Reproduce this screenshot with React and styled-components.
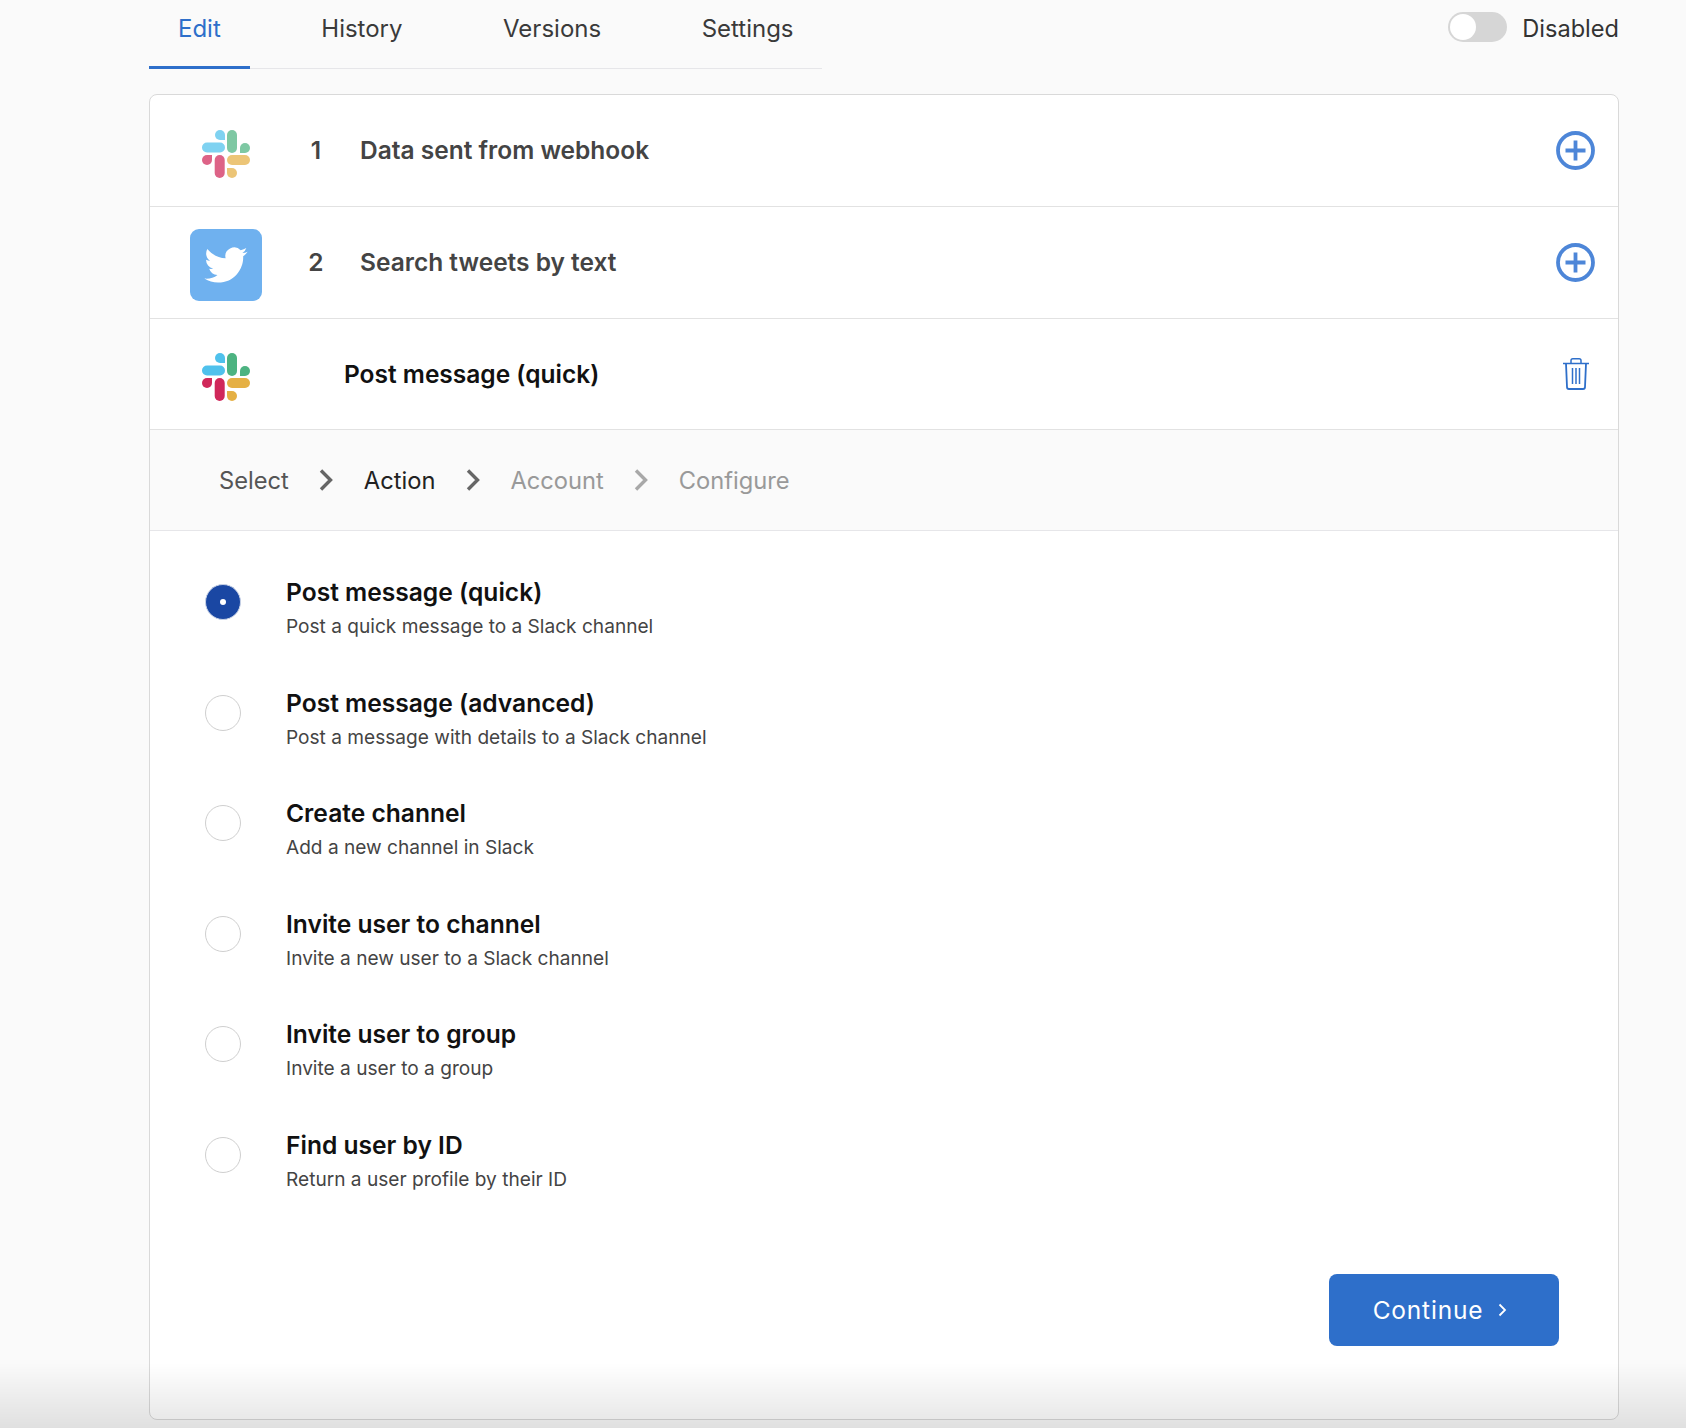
import React from 'react';
import styled, { createGlobalStyle } from 'styled-components';

const GlobalStyle = createGlobalStyle`
html, body {
  margin: 0;
  padding: 0;
  background: #fafafa;
  overflow: hidden;
}
* { box-sizing: border-box; }
`;

const actions = [
  { title: 'Post message (quick)', desc: 'Post a quick message to a Slack channel', selected: true },
  { title: 'Post message (advanced)', desc: 'Post a message with details to a Slack channel' },
  { title: 'Create channel', desc: 'Add a new channel in Slack' },
  { title: 'Invite user to channel', desc: 'Invite a new user to a Slack channel' },
  { title: 'Invite user to group', desc: 'Invite a user to a group' },
  { title: 'Find user by ID', desc: 'Return a user profile by their ID' },
];

function SlackLogo({ dim }) {
  return (
    <SlackSvg viewBox="0 0 48 48" $dim={dim}>
      <path fill="#4fc1ec" d="M18 0a5 5 0 0 0 0 10h5V5a5 5 0 0 0-5-5z" />
      <rect fill="#4fc1ec" x="0" y="12.5" width="23" height="10" rx="5" />
      <rect fill="#4db381" x="25" y="0" width="10" height="23" rx="5" />
      <path fill="#4db381" d="M43 13a5 5 0 0 0-5 5v5h5a5 5 0 0 0 0-10z" />
      <path fill="#d0285a" d="M5 25a5 5 0 0 0 0 10a5 5 0 0 0 5-5v-5z" />
      <rect fill="#d0285a" x="12.7" y="25" width="10" height="23" rx="5" />
      <rect fill="#e5b044" x="25" y="25" width="23" height="10" rx="5" />
      <path fill="#e5b044" d="M25 38v5a5 5 0 1 0 5-5z" />
    </SlackSvg>
  );
}

function PlusIcon() {
  return (
    <svg width="39" height="39" viewBox="0 0 39 39" fill="none">
      <circle cx="19.5" cy="19.5" r="17.5" stroke="#4d86d8" strokeWidth="3.8" />
      <path d="M19.5 9.5v20M9.5 19.5h20" stroke="#4d86d8" strokeWidth="3.8" />
    </svg>
  );
}

function TrashIcon() {
  return (
    <svg width="26" height="32" viewBox="0 0 26 32" fill="none" stroke="#2e6fca" strokeWidth="1.5">
      <path d="M0 5.5h26" />
      <path d="M8 5V2.6A1.8 1.8 0 0 1 9.8 .8h6.4A1.8 1.8 0 0 1 18 2.6V5" />
      <path d="M3 5.5l1 23.5a2 2 0 0 0 2 2h14a2 2 0 0 0 2-2l1-23.5" strokeWidth="1.8" />
      <path d="M9.5 10v16M13 10v16M16.5 10v16" />
    </svg>
  );
}

function Chevron({ color }) {
  return (
    <svg width="14" height="22" viewBox="0 0 14 22" fill="none">
      <path d="M2 1.5l9.5 9.5-9.5 9.5" stroke={color} strokeWidth="3.4" />
    </svg>
  );
}

export default function App() {
  return (
    <Page>
      <GlobalStyle />
      <TopBar>
        <Tabs>
          <Tab $active>Edit</Tab>
          <Tab>History</Tab>
          <Tab>Versions</Tab>
          <Tab>Settings</Tab>
        </Tabs>
        <ToggleGroup>
          <Toggle><Knob /></Toggle>
          <ToggleLabel>Disabled</ToggleLabel>
        </ToggleGroup>
      </TopBar>

      <Card>
        <StepRow>
          <LogoCell><SlackLogo dim /></LogoCell>
          <StepNumber>1</StepNumber>
          <StepTitle>Data sent from webhook</StepTitle>
          <RowAction><PlusIcon /></RowAction>
        </StepRow>
        <StepRow>
          <LogoCell>
            <TwitterBox>
              <svg width="44" height="36" viewBox="0 0 24 20" fill="#fff">
                <path d="M23.953 2.57a10 10 0 0 1-2.825.775 4.958 4.958 0 0 0 2.163-2.723c-.951.555-2.005.959-3.127 1.184a4.92 4.92 0 0 0-8.384 4.482C7.69 6.095 4.067 4.13 1.64 1.162a4.822 4.822 0 0 0-.666 2.475c0 1.71.87 3.213 2.188 4.096a4.904 4.904 0 0 1-2.228-.616v.06a4.923 4.923 0 0 0 3.946 4.827 4.996 4.996 0 0 1-2.212.085 4.936 4.936 0 0 0 4.604 3.417 9.867 9.867 0 0 1-6.102 2.105c-.39 0-.779-.023-1.17-.067a13.995 13.995 0 0 0 7.557 2.209c9.053 0 13.998-7.496 13.998-13.985 0-.21 0-.42-.015-.63A9.935 9.935 0 0 0 24 2.59z" />
              </svg>
            </TwitterBox>
          </LogoCell>
          <StepNumber>2</StepNumber>
          <StepTitle>Search tweets by text</StepTitle>
          <RowAction><PlusIcon /></RowAction>
        </StepRow>
        <StepRow>
          <LogoCell><SlackLogo /></LogoCell>
          <ActiveTitle>Post message (quick)</ActiveTitle>
          <RowAction><TrashIcon /></RowAction>
        </StepRow>

        <Stepper>
          <Crumb $color="#555">Select</Crumb>
          <Chevron color="#666" />
          <Crumb $color="#222">Action</Crumb>
          <Chevron color="#666" />
          <Crumb $color="#999">Account</Crumb>
          <Chevron color="#a8a8a8" />
          <Crumb $color="#999">Configure</Crumb>
        </Stepper>

        <ActionList>
          {actions.map((action) => (
            <ActionRow key={action.title}>
              <Radio $selected={action.selected} />
              <div>
                <ActionTitle>{action.title}</ActionTitle>
                <ActionDesc>{action.desc}</ActionDesc>
              </div>
            </ActionRow>
          ))}
        </ActionList>

        <Footer>
          <ContinueButton>
            Continue
            <svg width="9" height="14" viewBox="0 0 9 14" fill="none">
              <path d="M1.5 1.5L7 7l-5.5 5.5" stroke="#fff" strokeWidth="1.8" />
            </svg>
          </ContinueButton>
        </Footer>
      </Card>
      <BottomFade />
    </Page>
  );
}

const Page = styled.div`
width: 1686px;
height: 1428px;
padding: 0 67px 0 149px;
font-family: "Inter", "Liberation Sans", sans-serif;
background: #fafafa;`;

const TopBar = styled.div`
display: flex;
justify-content: space-between;
align-items: flex-start;`;

const Tabs = styled.div`
display: flex;
gap: 42.5px;
width: 673px;
height: 69px;
border-bottom: 1px solid #e6e6e9;`;

const Tab = styled.div`
height: 69px;
padding: 13px 29px 0;
font-size: 24px;
line-height: 32px;
color: ${(p) => (p.$active ? '#2e6fca' : '#3a3a3a')};
border-bottom: ${(p) => (p.$active ? '3px solid #2e6fca' : 'none')};`;

const ToggleGroup = styled.div`
display: flex;
align-items: flex-start;
gap: 15px;
padding-top: 12px;`;

const Toggle = styled.div`
width: 59px;
height: 30px;
padding: 2px;
border-radius: 15px;
background: #d6d6d6;`;

const Knob = styled.div`
width: 26px;
height: 26px;
border-radius: 50%;
background: #fff;`;

const ToggleLabel = styled.div`
margin-top: 1px;
font-size: 23.6px;
line-height: 32px;
color: #333;`;

const Card = styled.div`
margin-top: 25px;
height: 1326px;
background: #fff;
border: 1.5px solid #d9d9d9;
border-radius: 8px;`;

const StepRow = styled.div`
display: flex;
align-items: center;
height: 112px;
border-bottom: 1.5px solid #e2e2e2;
&:nth-child(3) {
  height: 111px;
}`;

const LogoCell = styled.div`
width: 143px;
margin-top: 6px;
padding-left: 40px;
flex-shrink: 0;`;

const SlackSvg = styled.svg`
display: block;
width: 48px;
height: 48px;
margin-left: 12px;
opacity: ${(p) => (p.$dim ? 0.72 : 1)};`;

const TwitterBox = styled.div`
display: flex;
align-items: center;
justify-content: center;
width: 72px;
height: 72px;
margin-top: -2px;
border-radius: 9px;
background: #6fb1ef;`;

const StepNumber = styled.div`
width: 67px;
margin-bottom: 2px;
padding-right: 21px;
text-align: center;
font-size: 24.5px;
font-weight: 600;
color: #444;`;

const StepTitle = styled.div`
flex: 1;
margin-bottom: 2px;
font-size: 24.5px;
font-weight: 600;
color: #444;`;

const ActiveTitle = styled.div`
flex: 1;
padding-left: 51px;
font-size: 24.5px;
font-weight: 600;
color: #111;`;

const RowAction = styled.div`
display: flex;
justify-content: center;
width: 39px;
margin-right: 23px;`;

const Stepper = styled.div`
display: flex;
align-items: center;
height: 101px;
padding-left: 69px;
gap: 30.5px;
background: #fafafa;
border-bottom: 1.5px solid #e6e6e9;`;

const Crumb = styled.div`
font-size: 23.7px;
color: ${(p) => p.$color};`;

const ActionList = styled.div`
padding: 44px 0 0 55px;`;

const ActionRow = styled.div`
display: flex;
align-items: flex-start;
gap: 45px;
height: 110.5px;`;

const Radio = styled.div`
display: flex;
align-items: center;
justify-content: center;
width: 36px;
height: 36px;
margin-top: 9px;
border-radius: 50%;
border: 1px solid ${(p) => (p.$selected ? '#c8d2e6' : '#cfcfcf')};
background: ${(p) => (p.$selected ? '#1a47a3' : '#fff')};
&::after {
  content: '';
  display: ${(p) => (p.$selected ? 'block' : 'none')};
  width: 6px;
  height: 6px;
  border-radius: 50%;
  background: #fff;
}`;

const ActionTitle = styled.div`
font-size: 24.6px;
font-weight: 600;
line-height: 34px;
color: #111;`;

const ActionDesc = styled.div`
margin-top: 2px;
font-size: 19.1px;
line-height: 30px;
color: #444;`;

const Footer = styled.div`
display: flex;
justify-content: flex-end;
padding: 36.3px 59px 0 0;`;

const ContinueButton = styled.button`
display: flex;
align-items: center;
justify-content: center;
gap: 15px;
width: 230px;
height: 72px;
padding: 0 8px 0 0;
border: none;
border-radius: 8px;
background: #2e6fca;
color: #fff;
font-family: inherit;
font-size: 24.5px;
letter-spacing: 0.8px;`;

const BottomFade = styled.div`
position: fixed;
left: 0;
right: 0;
bottom: 0;
height: 65px;
pointer-events: none;
background: linear-gradient(to bottom, rgba(0, 0, 0, 0), rgba(0, 0, 0, 0.1));`;
